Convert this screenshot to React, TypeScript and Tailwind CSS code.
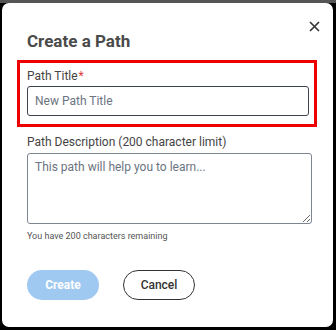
import React from "react"

export default function App() {
  return (
    <div
      className="w-[336px] h-[330px] bg-black border-t-[3px] border-t-[#555555] pl-[2px] pr-[3px] pb-[3px]"
      style={{ fontFamily: "Roboto, 'Liberation Sans', sans-serif" }}
    >
      <div className="relative h-full bg-white rounded-[7px] pt-[28px] pl-[15px] pr-[16px]">
        <button className="absolute right-[13px] top-[18px] text-[#333]" aria-label="Close">
          <svg width="11" height="11" viewBox="0 0 11 11" fill="none" stroke="currentColor" strokeWidth="1.6">
            <path d="M1 1L10 10M10 1L1 10" />
          </svg>
        </button>
        <h2 className="text-[17px] leading-[20px] font-bold text-[#4a4a4a] pl-[10px]">Create a Path</h2>
        <div className="mt-[9px] border-[3px] border-[#ee0000] pt-[6px] pl-[7px] pr-[5px] pb-[8px]">
          <label className="block text-[12px] leading-[14px] text-[#444]">
            Path Title<span className="text-[#e53935] ml-[1px]">*</span>
          </label>
          <input
            className="mt-[3px] block w-full h-[30px] rounded-[3px] border border-[#3d4450] px-[7px] text-[12px] text-[#333] placeholder:text-[#6b7480] outline-none"
            placeholder="New Path Title"
          />
        </div>
        <div className="pl-[10px] pr-[5px]">
          <label className="block mt-[8px] text-[12px] leading-[14px] text-[#444]">
            Path Description (200 character limit)
          </label>
          <textarea
            className="mt-[4px] block w-full h-[71px] rounded-[3px] border border-[#7d8590] px-[7px] py-[6px] text-[12px] leading-[14px] text-[#333] placeholder:text-[#6b7480] outline-none"
            placeholder="This path will help you to learn..."
          />
          <p className="mt-[7px] text-[9px] leading-[11px] text-[#555]">You have 200 characters remaining</p>
          <div className="mt-[28px] flex gap-[24px]">
            <button className="w-[72px] h-[30px] rounded-full bg-[#a0c9f2] text-white text-[12px] font-bold">
              Create
            </button>
            <button className="w-[72px] h-[30px] rounded-full border border-[#333] text-[#333] text-[12px] font-medium">
              Cancel
            </button>
          </div>
        </div>
      </div>
    </div>
  )
}
